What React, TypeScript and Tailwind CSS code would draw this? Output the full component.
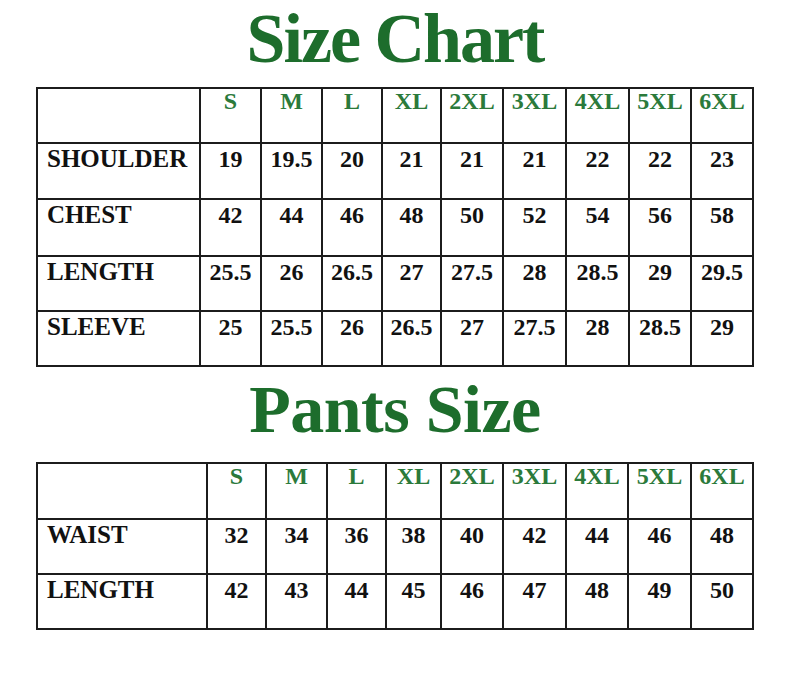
import { Fragment } from "react";

const SIZES = ["S", "M", "L", "XL", "2XL", "3XL", "4XL", "5XL", "6XL"];

const shirtRows: [string, string[]][] = [
  ["SHOULDER", ["19", "19.5", "20", "21", "21", "21", "22", "22", "23"]],
  ["CHEST", ["42", "44", "46", "48", "50", "52", "54", "56", "58"]],
  ["LENGTH", ["25.5", "26", "26.5", "27", "27.5", "28", "28.5", "29", "29.5"]],
  ["SLEEVE", ["25", "25.5", "26", "26.5", "27", "27.5", "28", "28.5", "29"]],
];

const pantsRows: [string, string[]][] = [
  ["WAIST", ["32", "34", "36", "38", "40", "42", "44", "46", "48"]],
  ["LENGTH", ["42", "43", "44", "45", "46", "47", "48", "49", "50"]],
];

function SizeTable({
  cols,
  rows,
  data,
}: {
  cols: string;
  rows: string;
  data: [string, string[]][];
}) {
  return (
    <div
      className="ml-[-1px] grid w-[718px] gap-[2px] bg-[#1c1c1c] p-[2px]"
      style={{ gridTemplateColumns: cols, gridTemplateRows: rows }}
    >
      <div className="bg-white" />
      {SIZES.map((s) => (
        <div key={s} className="bg-white text-center text-[24px] font-bold leading-none text-[#2b7a3b]">
          {s}
        </div>
      ))}
      {data.map(([label, vals]) => (
        <Fragment key={label}>
          <div className="bg-white pl-[9px] pt-[2px] text-[25px] font-bold leading-none text-[#111]">
            {label}
          </div>
          {vals.map((v, i) => (
            <div key={i} className="bg-white pt-[3px] text-center text-[24px] font-bold leading-none text-[#111]">
              {v}
            </div>
          ))}
        </Fragment>
      ))}
    </div>
  );
}

export default function App() {
  return (
    <div
      className="h-[678px] w-[794px] overflow-hidden bg-white pl-[37px]"
      style={{ fontFamily: '"Liberation Serif", "Times New Roman", serif' }}
    >
      <div className="h-[87px] w-[716px] pt-[4px] text-center text-[70px] font-bold leading-none tracking-[-2px] text-[#1d6d2c]">
        Size Chart
      </div>
      <SizeTable
        cols="161px 59px 59px 58px 57px 60px 61px 61px 60px 60px"
        rows="53px 54px 55px 53px 53px"
        data={shirtRows}
      />
      <div className="h-[95px] w-[716px] pt-[8px] text-center text-[68px] font-bold leading-none tracking-[-0.5px] text-[#1d6d2c]">
        Pants Size
      </div>
      <SizeTable
        cols="168px 57px 59px 57px 53px 60px 61px 60px 61px 60px"
        rows="54px 53px 53px"
        data={pantsRows}
      />
    </div>
  );
}
